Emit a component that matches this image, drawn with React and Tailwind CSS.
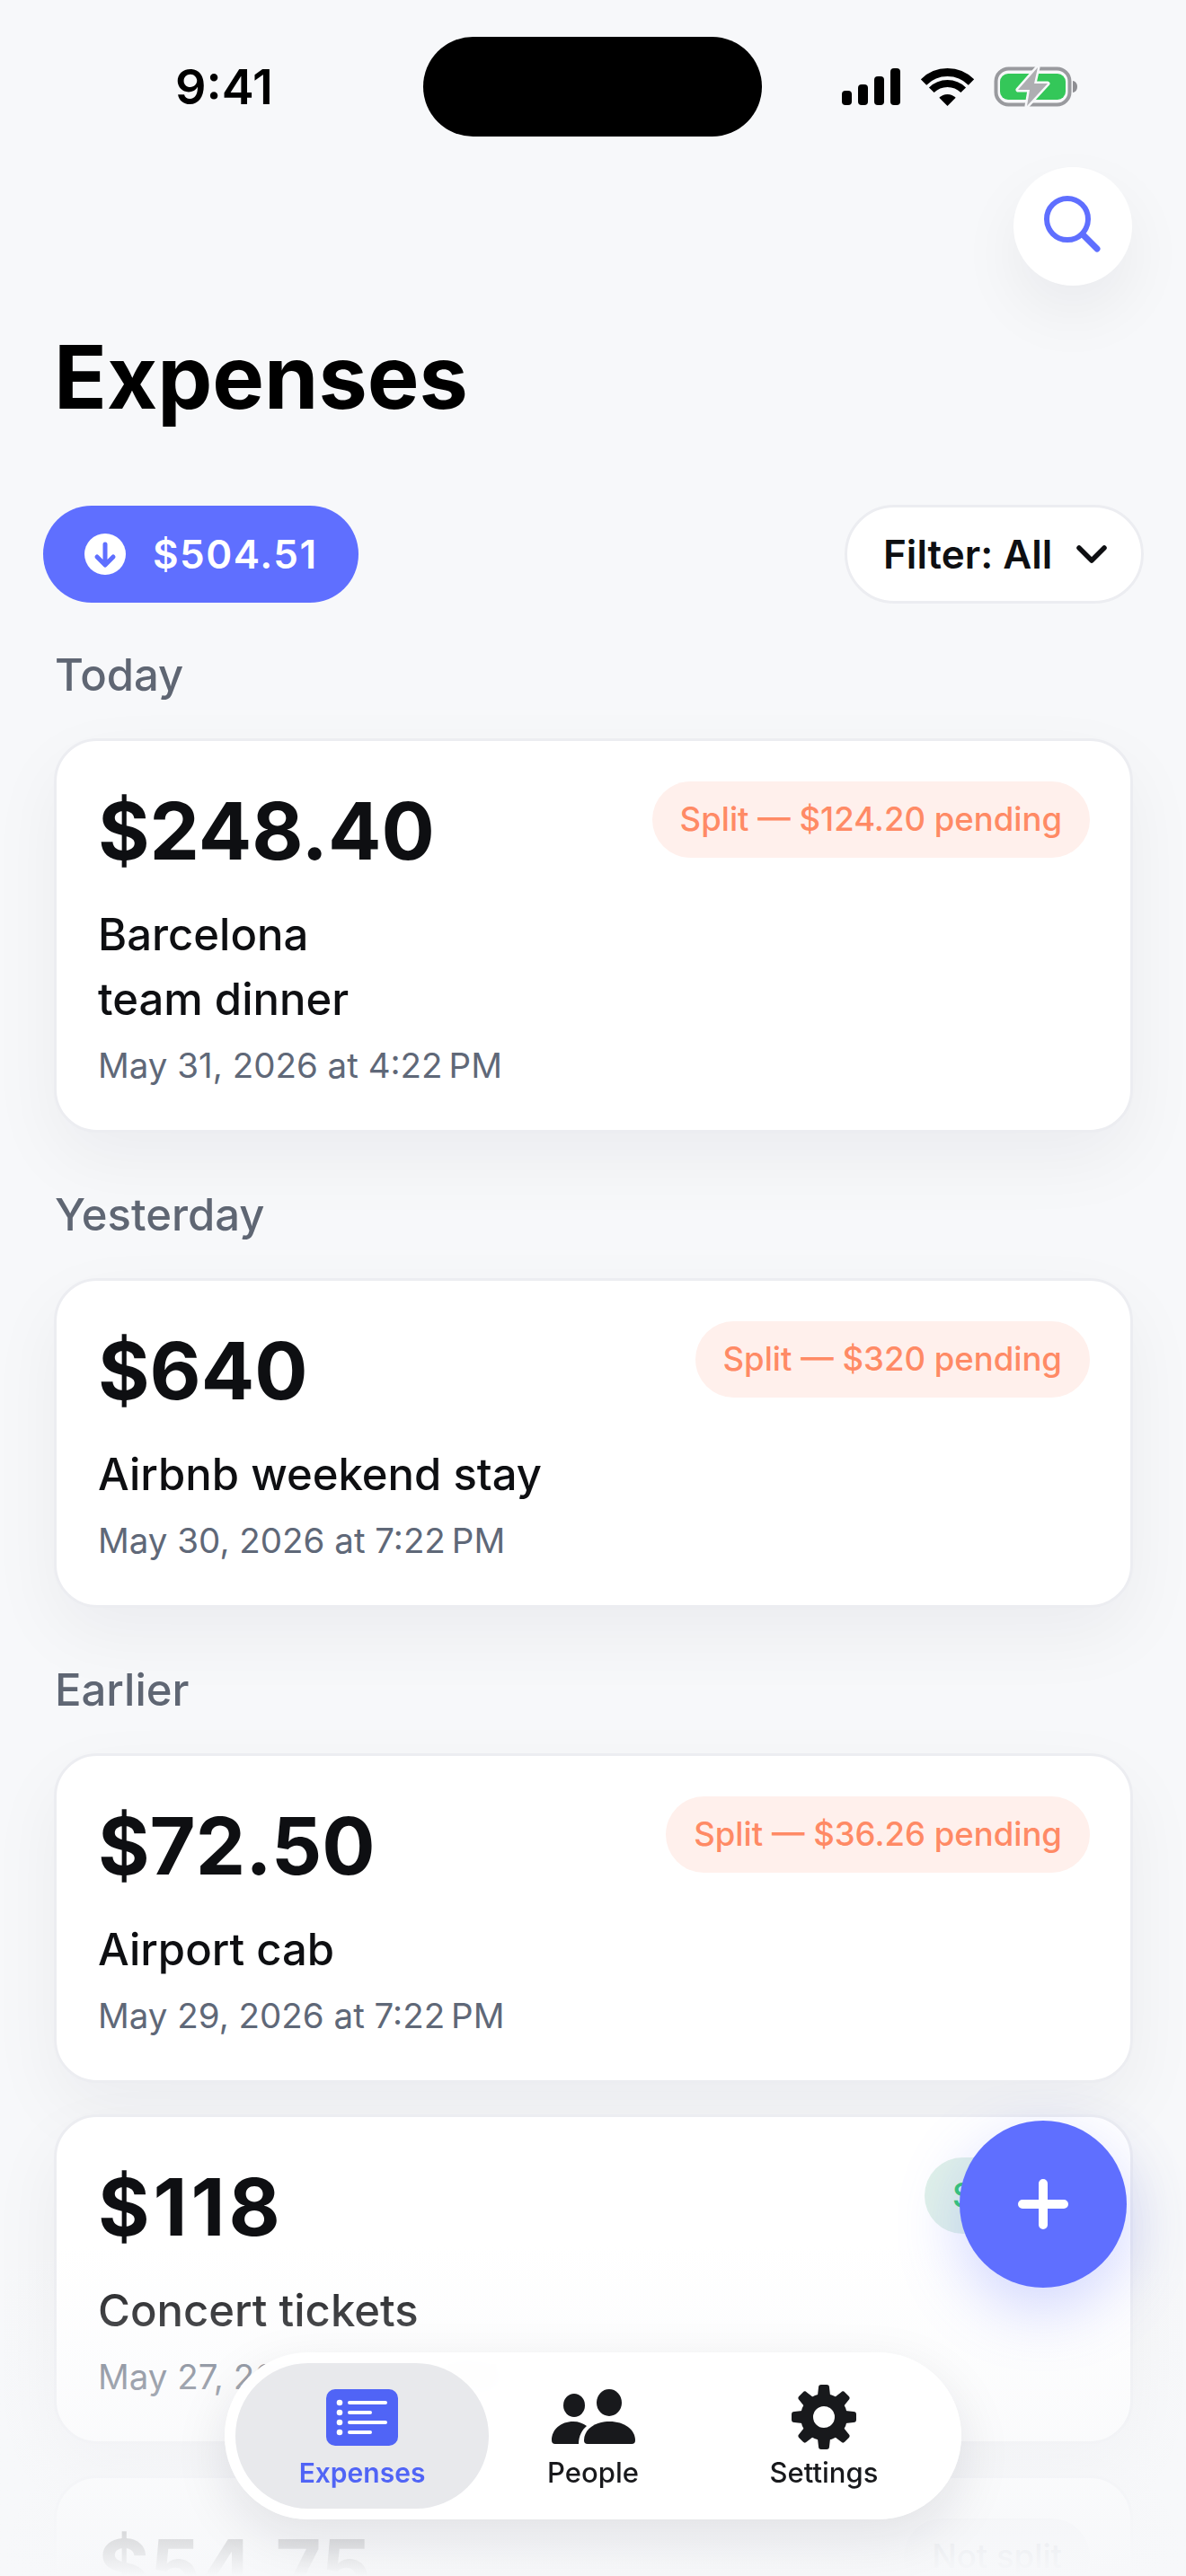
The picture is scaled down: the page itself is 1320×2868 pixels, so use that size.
import React from 'react';

const EXPENSES = [
    {
        label: 'Today',
        items: [
            { amount: '$248.40', name: ['Barcelona', 'team dinner'], date: 'May 31, 2026 at 4:22\u202fPM', badge: 'Split — $124.20 pending', tone: 'orange' }
        ]
    },
    {
        label: 'Yesterday',
        items: [
            { amount: '$640', name: ['Airbnb weekend stay'], date: 'May 30, 2026 at 7:22\u202fPM', badge: 'Split — $320 pending', tone: 'orange' }
        ]
    },
    {
        label: 'Earlier',
        items: [
            { amount: '$72.50', name: ['Airport cab'], date: 'May 29, 2026 at 7:22\u202fPM', badge: 'Split — $36.26 pending', tone: 'orange' },
            { amount: '$118', amountClass: 'tracking-[4px]', name: ['Concert tickets'], date: 'May 27, 2026 at 7:22\u202fPM', badge: 'Settled', tone: 'green' },
            { amount: '$54.75', name: [], date: '', badge: 'Not split', tone: 'gray' }
        ]
    }
];

const TONES = {
    orange: 'bg-[#FFF0EC] text-[#FF8A65]',
    green: 'bg-[#E0F1E9] text-[#34C772]',
    gray: 'bg-[#EEEFF3] text-[#9AA0AE]'
};

function StatusIcons() {
    return (
        <div className="flex items-center ml-[89px]">
            <svg width="66" height="42" viewBox="0 0 66 42" fill="#000">
                <rect x="0" y="25" width="11" height="16" rx="4" />
                <rect x="18" y="18" width="11" height="23" rx="4" />
                <rect x="36" y="9" width="11" height="32" rx="4" />
                <rect x="54" y="0" width="11" height="41" rx="4" />
            </svg>
            <svg className="ml-[22px]" width="60" height="44" viewBox="0 0 60 44" fill="none">
                <path d="M3 16.5A37.5 37.5 0 0 1 56 16.5" stroke="#000" strokeWidth="9" />
                <path d="M11.8 25.3A25 25 0 0 1 47.2 25.3" stroke="#000" strokeWidth="8" />
                <path d="M29.5 43L20.3 33.8A13 13 0 0 1 38.7 33.8Z" fill="#000" />
            </svg>
            <svg className="ml-[20px]" width="96" height="47" viewBox="0 0 96 47" fill="none">
                <rect x="3.5" y="3.5" width="82" height="40" rx="14" stroke="#999A9E" strokeWidth="4" />
                <rect x="8" y="9" width="73" height="29" rx="9" fill="#34C759" />
                <path d="M89 17C92 17.500 94 20 94 23.500C94 27 92 29.500 89 30Z" fill="#8E8E93" />
                <path d="M50 2L28 27H41L38 45L61 20H46Z" fill="#AEAEB2" stroke="#F7F8FA" strokeWidth="5" strokeLinejoin="round" paintOrder="stroke" />
            </svg>
        </div>
    );
}

function ExpenseCard({ item }) {
    return (
        <div className="bg-white border-[3px] border-[#ECEDF1] rounded-[48px] pl-[46px] pr-[45px] pt-[45px] pb-[48px] shadow-[0_30px_80px_rgba(20,24,40,0.05)]">
            <div className="flex items-start justify-between">
                <div className={`mt-[5px] text-[88px] leading-[100px] font-bold text-[#0E0F12] ${item.amountClass || ''}`}>{item.amount}</div>
                <div className={`h-[85px] px-[31px] rounded-full flex items-center text-[36.5px] font-medium ${TONES[item.tone]}`}>
                    {item.badge}
                </div>
            </div>
            <div className="mt-[30px] text-[49px] leading-[72px] font-[550] text-[#0E0F12]">
                {item.name.map((line) => (
                    <div key={line}>{line}</div>
                ))}
            </div>
            <div className="mt-[13px] text-[38.5px] leading-[48px] text-[#5F6878]">{item.date}</div>
        </div>
    );
}

function TabBar() {
    return (
        <div className="absolute left-[250px] top-[2619px] w-[820px] h-[186px] p-[12px] flex rounded-full bg-white/95 backdrop-blur-md shadow-[0_20px_60px_rgba(20,24,40,0.10)]">
            <div className="w-[282px] rounded-full bg-[#E8E9EC] flex flex-col items-center pt-[24px]">
                <div className="h-[72px] flex items-center">
                    <svg width="80" height="63" viewBox="0 0 80 63">
                        <rect width="80" height="63" rx="10" fill="#5064F6" />
                        <g fill="#fff">
                            <circle cx="15" cy="15" r="3.300" />
                            <circle cx="15" cy="26" r="3.300" />
                            <circle cx="15" cy="37" r="3.300" />
                            <circle cx="15" cy="48" r="3.300" />
                            <rect x="24" y="13" width="44" height="4" rx="2" />
                            <rect x="24" y="24" width="27" height="4" rx="2" />
                            <rect x="24" y="35" width="44" height="4" rx="2" />
                            <rect x="24" y="46" width="27" height="4" rx="2" />
                        </g>
                    </svg>
                </div>
                <div className="mt-[7px] text-[30px] leading-[38px] font-semibold text-[#5064F6]">Expenses</div>
            </div>
            <div className="w-[232px] flex flex-col items-center pt-[24px]">
                <svg width="98" height="72" viewBox="0 0 98 72" fill="#18191C">
                    <ellipse cx="28" cy="23" rx="12" ry="13" />
                    <ellipse cx="67" cy="20" rx="14" ry="15" />
                    <path d="M43 66H92a4 4 0 0 0 4-4C96 50 84 41 67.500 41C51 41 39 50 39 62a4 4 0 0 0 4 4Z" />
                    <path d="M7 66H33C33 57 37 50 42 46C38 43 33 41 27 41C13 41 3 50 3 62a4 4 0 0 0 4 4Z" />
                </svg>
                <div className="mt-[7px] text-[31px] leading-[38px] font-medium text-[#18191C]">People</div>
            </div>
            <div className="w-[282px] flex flex-col items-center pt-[24px]">
                <svg width="72" height="72" viewBox="0 0 72 72" fill="#18191C">
                    <circle cx="36" cy="36" r="19" fill="none" stroke="#18191C" strokeWidth="14" />
                    {[0, 45, 90, 135, 180, 225, 270, 315].map((deg) => (
                        <path key={deg} d="M29 12L30 3a3 3 0 0 1 3-3H39a3 3 0 0 1 3 3L43 12Z" transform={`rotate(${deg} 36 36)`} />
                    ))}
                </svg>
                <div className="mt-[7px] text-[31px] leading-[38px] font-medium text-[#18191C]">Settings</div>
            </div>
        </div>
    );
}

export default function App() {
    return (
        <div className="relative w-[1320px] h-[2868px] overflow-hidden bg-[#F7F8FA] font-[Inter,sans-serif]">
            {/* Status bar */}
            <div className="flex items-center pl-[195px] pt-[41px]">
                <div className="w-[276px] text-[54px] leading-[60px] font-semibold text-black">9:41</div>
                <div className="w-[377px] h-[111px] rounded-full bg-black" />
                <StatusIcons />
            </div>

            <div className="flex justify-end pr-[60px] mt-[34px]">
                <button className="w-[132px] h-[132px] rounded-full bg-white flex items-center justify-center shadow-[0_30px_70px_rgba(20,24,40,0.06)]">
                    <svg width="68" height="68" viewBox="0 0 68 68" fill="none" stroke="#5F6FFF" strokeWidth="6" strokeLinecap="round">
                        <circle cx="28" cy="26" r="23" />
                        <path d="M45 43L61 59" strokeWidth="7" />
                    </svg>
                </button>
            </div>

            <h1 className="mt-[46px] pl-[60px] text-[97px] leading-[112px] font-bold text-black">Expenses</h1>

            <div className="mt-[86px] pl-[48px] pr-[47px] flex items-center justify-between">
                <div className="h-[108px] w-[351px] rounded-full bg-[#5F6FFF] flex items-center pl-[46px] text-white">
                    <svg width="46" height="46" viewBox="0 0 46 46" fill="none">
                        <circle cx="23" cy="23" r="23" fill="#fff" />
                        <path d="M23 12V34M14 26L23 35L32 26" stroke="#5F6FFF" strokeWidth="5" strokeLinecap="round" strokeLinejoin="round" />
                    </svg>
                    <span className="ml-[30px] text-[44px] font-semibold tracking-[1.5px]">$504.51</span>
                </div>
                <button className="h-[110px] w-[333px] rounded-full bg-white border-[3px] border-[#ECEDF1] flex items-center pl-[40px]">
                    <span className="text-[44px] font-semibold text-[#0E0F12]">Filter: All</span>
                    <svg className="ml-[26px]" width="36" height="24" viewBox="0 0 36 24" fill="none" stroke="#0E0F12" strokeWidth="5.500" strokeLinecap="round" strokeLinejoin="round">
                        <path d="M4 5L18 19L32 5" />
                    </svg>
                </button>
            </div>

            {/* Expense list */}
            <div className="mt-[52px] pl-[60px] pr-[59px] flex flex-col">
                {EXPENSES.map((group) => (
                    <div key={group.label} className="mb-[64px]">
                        <div className="pl-[1px] text-[49px] leading-[56px] font-[550] text-[#5F6673] mb-[42px]">{group.label}</div>
                        <div className="flex flex-col gap-[35px]">
                            {group.items.map((item) => (
                                <ExpenseCard key={item.amount} item={item} />
                            ))}
                        </div>
                    </div>
                ))}
            </div>

            {/* Fade under the tab bar */}
            <div className="absolute left-0 right-0 bottom-0 h-[368px] bg-linear-to-b from-[#F7F8FA]/0 to-[#F7F8FA]" />

            <button className="absolute left-[1068px] top-[2361px] w-[186px] h-[186px] rounded-full bg-[#5F6FFF] flex items-center justify-center shadow-[0_24px_70px_rgba(95,111,255,0.28)]">
                <svg width="56" height="56" viewBox="0 0 56 56" fill="none" stroke="#fff" strokeWidth="10" strokeLinecap="round">
                    <path d="M28 5V51M5 28H51" />
                </svg>
            </button>

            <TabBar />
        </div>
    );
}
